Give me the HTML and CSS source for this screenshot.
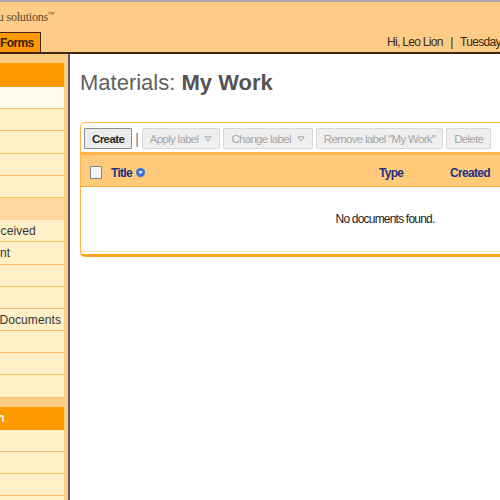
FILE: index.html
```html
<!DOCTYPE html>
<html lang="en">

<head>
  <meta charset="UTF-8">
  <meta name="viewport" content="width=device-width, initial-scale=1.0">
  <title>Materials: My Work</title>
  <link rel="stylesheet" href="styles.css">
</head>

<body>
  <div class="page">
    <div class="masthead">
      <div class="brand">Campus edu solutions<sup>&trade;</sup></div>
      <div class="navbar">
        <div class="tabs">
          <span class="tab active">Forms</span>
        </div>
        <div class="user-info">Hi, Leo Lion <span class="pipe">|</span> Tuesday, March 3, 2009</div>
      </div>
    </div>

    <div class="content">
      <div class="sidebar">
        <div class="nav-head">Materials</div>
        <div class="nav-item current">My Work</div>
        <div class="nav-item">Inbox</div>
        <div class="nav-item">Drafts</div>
        <div class="nav-item">Labels</div>
        <div class="nav-item">Trash</div>
        <div class="nav-sub">Shared</div>
        <div class="nav-item">Documents Received</div>
        <div class="nav-item">Documents Sent</div>
        <div class="nav-item">Templates</div>
        <div class="nav-item">Favorites</div>
        <div class="nav-item">Public Shared Documents</div>
        <div class="nav-item">Archive</div>
        <div class="nav-item">Recent</div>
        <div class="nav-item">Tags</div>

        <div class="nav-head gap">Administration</div>
        <div class="nav-item">Users</div>
        <div class="nav-item">Groups</div>
        <div class="nav-item">Settings</div>
        <div class="nav-item">Reports</div>
      </div>

      <div class="main">
        <h1 class="page-title">Materials: <b>My Work</b></h1>

        <div class="panel">
          <div class="toolbar">
            <button class="btn primary">Create</button>
            <span class="sep">|</span>
            <button class="btn" disabled>Apply label <span class="caret"><svg width="8" height="6" viewBox="0 0 8 6"><path d="M0.8 0.8 H7.2 L4 5.2 Z" fill="none" stroke="#a8a8a8" stroke-width="1"/></svg></span></button>
            <button class="btn" disabled>Change label <span class="caret"><svg width="8" height="6" viewBox="0 0 8 6"><path d="M0.8 0.8 H7.2 L4 5.2 Z" fill="none" stroke="#a8a8a8" stroke-width="1"/></svg></span></button>
            <button class="btn" disabled>Remove label "My Work"</button>
            <button class="btn" disabled>Delete</button>
          </div>

          <div class="grid-head">
            <div class="col-check"><span class="checkbox"></span></div>
            <div class="col-title">Title <svg class="sort-icon" width="9" height="9" viewBox="0 0 9 9"><circle cx="4.5" cy="4.5" r="4.5" fill="#3f6fd1"/><path d="M2.3 3.3 H6.7 L4.5 6 Z" fill="#fff"/></svg></div>
            <div class="col-type">Type</div>
            <div class="col-created">Created</div>
            <div class="col-modified">Modified</div>
          </div>

          <div class="grid-body">No documents found.</div>
        </div>
      </div>
    </div>
  </div>
</body>

</html>
```

FILE: styles.css
```css
body {
  margin: 0;
  padding: 0;
  width: 500px;
  height: 500px;
  overflow: hidden;
  background-color: #fff;
  font-family: "Liberation Sans", Arial, sans-serif;
  color: #333;
}

.page {
  margin-left: -88px;
  width: 800px;
}

/* top bar */
.masthead {
  background-color: #ffcc88;
  border-top: 2px solid #a9a9a9;
  border-bottom: 2px solid #3f2610;
  height: 50px;
  display: flex;
  flex-direction: column;
}

.brand {
  height: 30px;
  padding-left: 34px;
  padding-top: 8px;
  box-sizing: border-box;
  font-family: "Liberation Serif", "Times New Roman", serif;
  font-size: 12px;
  letter-spacing: -0.2px;
  color: #5b4526;
}

.brand sup {
  font-size: 6px;
}

.navbar {
  display: flex;
  align-items: flex-end;
  height: 20px;
}

.tabs {
  width: 470px;
  padding-left: 81px;
  box-sizing: border-box;
  display: flex;
}

.tab {
  display: inline-block;
  height: 19px;
  line-height: 20px;
  padding: 0 6px;
  border: 1px solid #3f2610;
  border-bottom: 0;
  font-size: 12px;
  font-weight: bold;
  letter-spacing: -0.6px;
  color: #3a2206;
}

.tab.active {
  background-color: #ff9900;
}

.user-info {
  padding-left: 5px;
  padding-bottom: 3px;
  white-space: nowrap;
  font-size: 12px;
  letter-spacing: -0.7px;
  color: #3a2a12;
}

.pipe {
  margin: 0 5px;
}

/* layout */
.content {
  display: flex;
  align-items: stretch;
  min-height: 460px;
}

.sidebar {
  width: 152px;
  padding: 9px 4px 0 0;
  background-color: #ffcc88;
  border-right: 2px solid #5c5c5c;
  box-shadow: 1px 0 0 #b5b5b5;
}

.nav-head {
  height: 24px;
  line-height: 24px;
  padding-left: 8px;
  background-color: #ff9900;
  color: #fff;
  font-size: 12px;
  font-weight: bold;
  white-space: nowrap;
  overflow: hidden;
}

.nav-head.gap {
  margin-top: 9px;
  height: 23px;
  line-height: 23px;
}

.nav-item,
.nav-sub {
  height: 21.2px;
  line-height: 22px;
  padding-left: 8px;
  border-bottom: 1px solid #ffc163;
  background-color: #fff0c8;
  font-size: 12px;
  letter-spacing: 0.1px;
  color: #333;
  white-space: nowrap;
  overflow: hidden;
}

.nav-item.current {
  background-color: #fffbea;
}

.nav-sub {
  background-color: #ffd89f;
  border-bottom-color: #ffd89f;
}

.main {
  flex: 1;
  padding-left: 10px;
  background-color: #fff;
}

.page-title {
  margin: 16px 0 26px 0;
  font-size: 22px;
  line-height: 26px;
  font-weight: normal;
  color: #5f5f5f;
}

.page-title b {
  color: #545454;
}

/* documents panel */
.panel {
  width: 610px;
  box-sizing: border-box;
  border: 1px solid #ffb54c;
  border-bottom: 3px solid #ffa422;
  border-radius: 5px;
  padding-bottom: 2px;
}

.toolbar {
  display: flex;
  align-items: center;
  gap: 3px;
  padding: 5px 3px 3px 3px;
  border-bottom: 3px solid #ffb44a;
}

.btn {
  height: 21px;
  padding: 0 7px;
  border: 1px solid #d8d8d8;
  border-radius: 1px;
  background-color: #efefef;
  font-family: "Liberation Sans", Arial, sans-serif;
  font-size: 11.5px;
  letter-spacing: -0.7px;
  color: #a6a6a6;
  display: flex;
  align-items: center;
}

.btn.primary {
  border-color: #8c8c8c;
  background-color: #ececec;
  color: #2b2b2b;
  font-weight: bold;
  letter-spacing: -0.6px;
}

.sep {
  margin: 0;
  font-size: 14px;
  color: #777;
}

.caret {
  display: inline-flex;
  margin-left: 6px;
}

.grid-head {
  display: grid;
  grid-template-columns: 30px 268px 71px 110px 1fr;
  align-items: center;
  height: 32px;
  padding-top: 4px;
  box-sizing: border-box;
  background-color: #ffcb7a;
  border-bottom: 1px solid #ffa83c;
  font-size: 12px;
  font-weight: bold;
  letter-spacing: -0.7px;
  color: #1f2f86;
}

.col-check {
  padding-left: 9px;
  display: flex;
}

.checkbox {
  width: 10px;
  height: 11px;
  border: 1px solid #7f8794;
  background-color: #f4f5f7;
}

.col-title {
  display: flex;
  align-items: center;
  gap: 4px;
}

.grid-body {
  height: 64px;
  line-height: 64px;
  text-align: center;
  border-bottom: 1px solid #ffdcab;
  font-size: 12px;
  letter-spacing: -0.8px;
  color: #222;
}
```
